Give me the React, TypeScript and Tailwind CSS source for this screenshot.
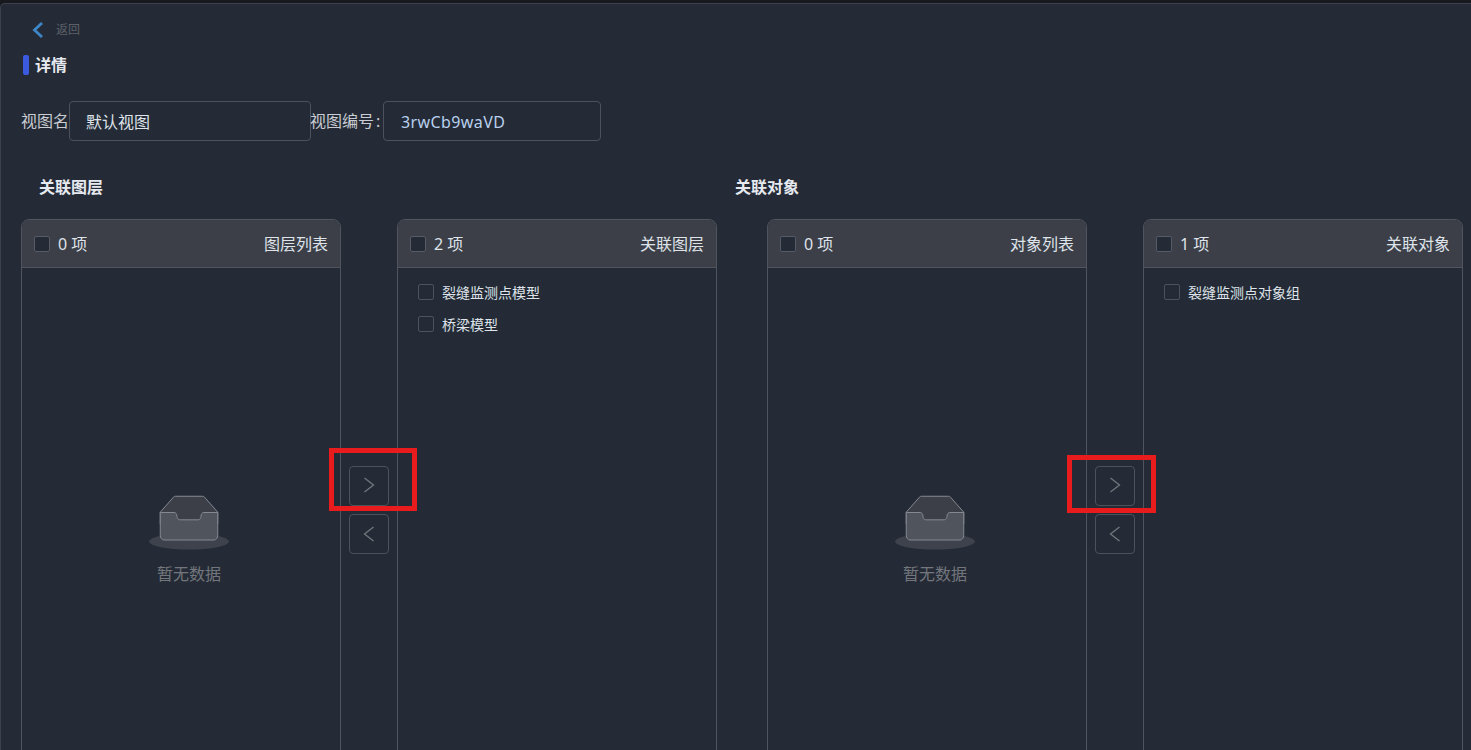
const fontStack = 'font-["Noto_Sans","Noto_Sans_CJK_SC",sans-serif]';

function Chevron({ left }: { left?: boolean }) {
  return (
    <svg width="12" height="16" viewBox="0 0 12 16" fill="none">
      <polyline
        points={left ? '10.5,1 1.5,8 10.5,15' : '1.5,1 10.5,8 1.5,15'}
        stroke="#73767c"
        strokeWidth="1.3"
      />
    </svg>
  );
}

function EmptyBox() {
  return (
    <div className="flex flex-col items-center">
      <svg width="80" height="56" viewBox="0 0 64 44.8" fill="none">
        <ellipse cx="32" cy="37.2" rx="32" ry="6.4" fill="#3e424c" />
        <g transform="translate(0 1)" stroke="#858991" strokeWidth="0.8">
          <path d="M55 12.76L44.854 1.258C44.367.474 43.656 0 42.907 0H21.093c-.749 0-1.46.474-1.947 1.257L9 12.761V22h46v-9.24z" fill="#3c3f47" />
          <path
            d="M41.613 15.931c0-1.605.994-2.93 2.227-2.931H55v18.137C55 33.26 53.68 35 52.05 35h-40.1C10.32 35 9 33.259 9 31.137V13h11.16c1.233 0 2.227 1.323 2.227 2.928v.022c0 1.605 1.005 2.901 2.237 2.901h14.752c1.232 0 2.237-1.308 2.237-2.913v-.007z"
            fill="#50545d"
          />
        </g>
      </svg>
      <p className="mt-[11px] text-[16px] leading-[24px] text-[#73767c]">暂无数据</p>
    </div>
  );
}

function Panel({ count, title, items }: { count: number; title: string; items: string[] }) {
  return (
    <div className="flex h-[582px] w-[320px] shrink-0 flex-col rounded-t-[8px] border border-[#50545e]">
      <div className="flex h-[48px] shrink-0 items-center justify-between rounded-t-[7px] border-b border-[#50545e] bg-[#3c3f47] pl-[12px] pr-[12px] text-[16px] text-[#dfe3ea]">
        <div className="flex items-center gap-[8px]">
          <span className="h-[16px] w-[16px] rounded-[2px] border border-[#575b65] bg-[#242b36]" />
          <span>{count} 项</span>
        </div>
        <span>{title}</span>
      </div>
      {items.length > 0 ? (
        <ul className="pt-[8px]">
          {items.map((item) => (
            <li key={item} className="flex h-[32px] items-center gap-[8px] pl-[20px] text-[14px] text-[#dfe3ea]">
              <span className="h-[16px] w-[16px] rounded-[2px] border border-[#4d515b]" />
              {item}
            </li>
          ))}
        </ul>
      ) : (
        <div className="flex flex-1 items-center justify-center pl-[16px] pt-[12px]">
          <EmptyBox />
        </div>
      )}
    </div>
  );
}

function Transfer({ left, right }: { left: { title: string; items: string[] }; right: { title: string; items: string[] } }) {
  return (
    <div className="flex items-center">
      <Panel count={left.items.length} title={left.title} items={left.items} />
      <div className="flex w-[56px] shrink-0 flex-col items-center gap-[8px]">
        <button className="flex h-[40px] w-[40px] items-center justify-center rounded-[4px] border border-[#4d515b] pb-[3px]">
          <Chevron />
        </button>
        <button className="flex h-[40px] w-[40px] items-center justify-center rounded-[4px] border border-[#4d515b] pb-[1px]">
          <Chevron left />
        </button>
      </div>
      <Panel count={right.items.length} title={right.title} items={right.items} />
    </div>
  );
}

export default function App() {
  return (
    <div className={`relative h-[750px] overflow-hidden bg-[#17191e] pt-[3px] ${fontStack}`}>
      <div className="h-full rounded-tl-[5px] border-l border-t border-[#3d414b] bg-[#242b36] pl-[20px]">
        {/* 返回 */}
        <div className="flex h-[49px] items-center pl-[11px] pt-[2px]">
          <svg width="12" height="18" viewBox="0 0 12 18" fill="none">
            <polyline points="10,2 2.5,9 10,16" stroke="#3f86c6" strokeWidth="2.8" />
          </svg>
          <span className="ml-[12px] text-[12px] text-[#5d6169]">返回</span>
        </div>

        <div className="flex h-[24px] items-center">
          <span className="ml-[2px] h-[20px] w-[6px] rounded-[2px] bg-[#3a5be0]" />
          <span className="ml-[6px] text-[16px] font-bold text-[#e6e9ef]">详情</span>
        </div>

        <div className="mt-[24px] flex items-center text-[16px] text-[#c9ccd2]">
          <label>视图名</label>
          <div className="flex h-[40px] w-[242px] items-center rounded-[4px] border border-[#4d515b] pl-[16px] pt-[2px] text-[#dfe3ea]">默认视图</div>
          <label className="-ml-[1px] w-[73px]">
            视图编号<span className="ml-[2px]">:</span>
          </label>
          <div className="flex h-[40px] w-[218px] items-center rounded-[4px] border border-[#4d515b] pl-[17px] pt-[2px] tracking-[0.4px] text-[#b9d0ee]">3rwCb9waVD</div>
        </div>

        <div className="mt-[34px] flex h-[24px] items-center pl-[18px] text-[16px] font-bold text-[#e6e9ef]">
          <span className="w-[696px]">关联图层</span>
          <span>关联对象</span>
        </div>

        <div className="mt-[20px] flex gap-[50px]">
          <Transfer
            left={{ title: '图层列表', items: [] }}
            right={{ title: '关联图层', items: ['裂缝监测点模型', '桥梁模型'] }}
          />
          <Transfer
            left={{ title: '对象列表', items: [] }}
            right={{ title: '关联对象', items: ['裂缝监测点对象组'] }}
          />
        </div>
      </div>

      {/* 截图上的红框标注 */}
      <div className="absolute left-[329px] top-[448px] h-[63px] w-[88px] border-[5px] border-[#e81c1c]" />
      <div className="absolute left-[1067px] top-[455px] h-[58px] w-[89px] border-[5px] border-[#e81c1c]" />
    </div>
  );
}
